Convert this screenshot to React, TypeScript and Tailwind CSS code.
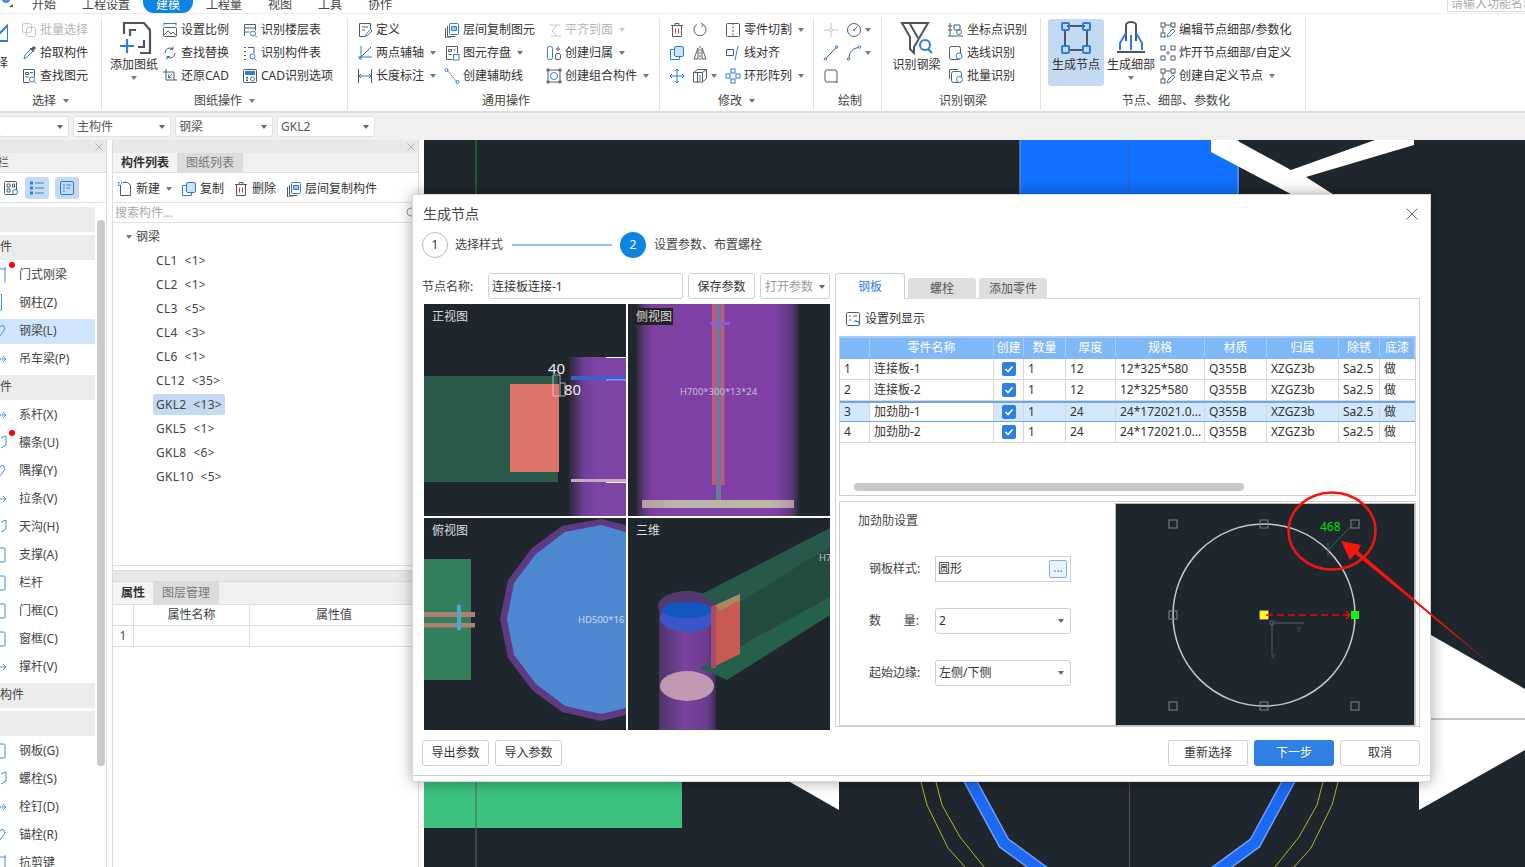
import React from "react";

const D = "#555b63";
const B = "#2a7de1";

const paths: Record<string, React.ReactNode> = {
  multi: (<g stroke="#c4c4c4" fill="none"><rect x="1.5" y="1.5" width="9" height="9" rx="2" /><rect x="5.5" y="5.5" width="9" height="9" rx="2" /></g>),
  pick: (<g fill="none"><path d="M3 14l1-4 6-6 2 2-6 6z" stroke={B} /><path d="M9 3l4 4M10 4l3-2.5 1.500 1.500L11.500 6z" stroke={D} fill={D} /></g>),
  find: (<g fill="none"><path d="M2.500 1.500h11v8M2.500 1.500v13h6" stroke={D} /><path d="M4.500 4.500h3v2h-3zM9 4.500h3M4.500 9h3" stroke={D} /><circle cx="11" cy="11.500" r="2.500" stroke={B} /><path d="M13 13.500l2 2" stroke={B} /></g>),
  scale: (<g fill="none"><path d="M2 1.500h12M2 .5v3M14 .5v3" stroke={B} /><rect x="1.500" y="5.500" width="13" height="9" rx="1" stroke={D} /><path d="M2 13l4-4 3 3 2-2 3 3" stroke={D} /></g>),
  swap: (<g fill="none"><path d="M3 8a5 5 0 0 1 8-4M13 8a5 5 0 0 1-8 4" stroke={D} /><path d="M11 1.500V4.500H8" stroke={B} /><path d="M5 14.500V11.500h3" stroke={B} /></g>),
  restore: (<g fill="none"><path d="M4 1v11h11M1 4h11v8" stroke={D} /><path d="M10 6L6.500 9.500M6.500 6.500v3h3" stroke={B} /></g>),
  tableQ: (<g fill="none"><path d="M2.500 14V2.500h11v6M2.500 6h11M2.500 10h5" stroke={D} /><circle cx="11" cy="11.500" r="2.500" stroke={B} /><path d="M13 13.500l2 2" stroke={B} /></g>),
  listQ: (<g fill="none"><path d="M2 2.500h2M2 6.500h2M2 10.500h2M2 14.500h2M6 2.500h6v6" stroke={D} /><circle cx="10.500" cy="11.500" r="2.500" stroke={B} /><path d="M12.500 13.500l2 2" stroke={B} /></g>),
  cad: (<g fill="none"><rect x="1.500" y="1.500" width="13" height="13" rx="1" stroke={D} /><rect x="3" y="3" width="10" height="4" fill={B} stroke="none" /><path d="M4 9.500h2M5 9.500v3M4 12.500h2" stroke={D} /><circle cx="10.500" cy="11" r="2" stroke={B} /></g>),
  def: (<g fill="none"><path d="M13.500 7V1.500h-11v13h6" stroke={D} /><path d="M5 5h6M5 8h3" stroke={D} /><path d="M8.500 14l1-2.500 4-4 1.500 1.500-4 4z" stroke={B} /></g>),
  axis: (<g fill="none"><path d="M2 14L14 2" stroke={D} /><path d="M4 1v14M1 12h14" stroke={B} /></g>),
  dim: (<g fill="none"><path d="M1.500 1v14M14.500 1v14" stroke={D} /><path d="M2 8h12M4 6L2 8l2 2M12 6l2 2-2 2" stroke={B} /></g>),
  copyLayer: (<g fill="none"><rect x="5.500" y="1.500" width="9" height="11" rx="1" stroke={B} /><path d="M3.500 4v10.500h8M1.500 6v10h6" stroke={D} /><path d="M7.500 4.500h5v4h-5z" fill="#9cc3f2" stroke={B} /></g>),
  save: (<g fill="none"><path d="M13.500 8V1.500h-11v13h6" stroke={D} /><path d="M4.500 4.500h3v2h-3zM9.500 5h2M4.500 9.500h3" stroke={D} /><rect x="9.500" y="9.500" width="5.500" height="5.500" stroke={B} /></g>),
  line: (<g fill="none"><path d="M3 2l10 12" stroke={D} strokeDasharray="2 1" /><circle cx="2.500" cy="2" r="1.500" stroke={B} /><circle cx="13.500" cy="14" r="1.500" stroke={B} /></g>),
  align: (<g fill="none" stroke="#c4c4c4"><path d="M3 3h11M5 14h10M11 3L6 9l5 5" /></g>),
  attr: (<g fill="none"><rect x="1.500" y="1.500" width="5" height="13" rx="2" stroke={B} /><rect x="9.500" y="8.500" width="5" height="6" rx="1.500" stroke={D} /><path d="M10 4h4M12 1.500V6" stroke={D} /></g>),
  group: (<g fill="none"><rect x="2" y="2" width="12" height="12" stroke={D} /><circle cx="8" cy="8" r="3.500" stroke={B} /><path d="M1 1h2v2H1zM13 1h2v2h-2zM1 13h2v2H1zM13 13h2v2h-2z" stroke={D} /></g>),
  trash: (<g fill="none"><path d="M2 3.500h12M6 3.500V1.500h4v2M3.500 3.500v11h9v-11" stroke={D} /><path d="M6.500 6.500v5M9.500 6.500v5" stroke="#d33" /></g>),
  rotate: (<g fill="none"><path d="M11 2.500a6 6 0 1 1-6 0" stroke={D} /><path d="M9 1l2 1.500L9.500 5" stroke={B} /></g>),
  cut: (<g fill="none"><rect x="1.500" y="1.500" width="13" height="13" rx="1" stroke={D} /><path d="M8 1v14" stroke={D} strokeDasharray="2 1.500" /></g>),
  copy: (<g fill="none"><rect x="5.500" y="1.500" width="9" height="10" rx="1.500" fill="#cfe2f9" stroke={B} /><path d="M5 4.500H1.500v10h9V12" stroke={B} /></g>),
  mirror: (<g fill="none"><path d="M8 1v14" stroke={D} strokeDasharray="2 1" /><path d="M6 3L2 14h4zM10 3l4 11h-4z" stroke={D} /></g>),
  lineAlign: (<g fill="none"><path d="M1.500 4.500h7v6h-7z" stroke={D} /><path d="M13 1l-3 14" stroke={B} /></g>),
  move: (<g fill="none" stroke={B}><path d="M8 1v14M1 8h14M6 3l2-2 2 2M6 13l2 2 2-2M3 6L1 8l2 2M13 6l2 2-2 2" /></g>),
  stretch: (<g fill="none"><path d="M1.500 4.500l4-3h9v9l-4 3.500h-9z" stroke={D} /><path d="M5.500 4.500v10M1.500 4.500h9v9M10.500 4.500l4-3" stroke={D} /><path d="M8 7v6" stroke={B} /></g>),
  ring: (<g fill="none" stroke={B}><rect x="6" y="1" width="4" height="4" /><rect x="1" y="6" width="4" height="4" /><rect x="11" y="6" width="4" height="4" /><rect x="6" y="11" width="4" height="4" /></g>),
  cross: (<g fill="none" stroke="#c4c4c4"><path d="M8 1v5M8 10v5M1 8h5M10 8h5" /><circle cx="8" cy="8" r="1.500" /></g>),
  dial: (<g fill="none"><circle cx="8" cy="8" r="6.500" stroke={D} /><path d="M8 8l3.500-3.500" stroke={D} /><circle cx="8" cy="8" r="1" fill={B} stroke="none" /></g>),
  seg: (<g fill="none"><path d="M3 13.500L13 2.500" stroke={D} /><circle cx="2.500" cy="14" r="1.300" stroke={B} /><circle cx="13.500" cy="2" r="1.300" stroke={B} /></g>),
  arc: (<g fill="none"><path d="M3 13.500C3 7 7 3 13 2.500" stroke={D} /><circle cx="2.500" cy="14" r="1.300" stroke={B} /><circle cx="13.500" cy="2" r="1.300" stroke={B} /></g>),
  rectD: (<g fill="none"><rect x="2" y="2" width="12" height="12" rx="2" stroke={D} /><circle cx="14" cy="14" r="1" fill={B} stroke="none" /></g>),
  coord: (<g fill="none"><path d="M2 1v13M0 14h15M0 4h4M0 8h4" stroke={D} /><path d="M6 3h6v5H6z" stroke={D} /><circle cx="11" cy="10" r="2.500" stroke={B} /></g>),
  selLine: (<g fill="none"><rect x="1.500" y="1.500" width="11" height="13" rx="2" stroke={D} /><circle cx="11" cy="11" r="3" fill="#fff" stroke={B} /></g>),
  batch: (<g fill="none"><path d="M1.500 11V1.500H10" stroke={D} /><rect x="3.500" y="3.500" width="10" height="11" rx="2" stroke={D} /><circle cx="11.500" cy="11.500" r="3" fill="#fff" stroke={B} /></g>),
  editNode: (<g fill="none"><path d="M3 3h10M3 3v10M13 3v3" stroke={D} /><rect x="1" y="1" width="4" height="4" fill="#fff" stroke={D} /><rect x="11" y="1" width="4" height="4" fill="#fff" stroke={D} /><rect x="1" y="11" width="4" height="4" fill="#fff" stroke={D} /><path d="M7 15l1-3 5-5 2 2-5 5z" stroke={B} /></g>),
  explode: (<g fill="none" stroke={D}><rect x="1" y="1" width="4" height="4" /><rect x="11" y="1" width="4" height="4" /><rect x="1" y="11" width="4" height="4" /><rect x="11" y="11" width="4" height="4" /><path d="M6 8h4M8 6v4" stroke={B} /></g>),
  newDoc: (<g fill="none"><path d="M3.500 4v10.500h10V4l-3-2.500H6" stroke={D} /><path d="M1 1h1.500v1.500H1zM4 1h1v1.500H4zM1 3.500h1.500V5H1z" fill={B} stroke="none" /></g>),
  gridIc: (<g fill="none"><rect x="1.500" y="1.500" width="12" height="13" rx="1" stroke={D} /><path d="M4 4h3v3H4zM9.500 4h2v3h-2zM4 9h3v3H4z" stroke={D} /><circle cx="12" cy="12" r="2.500" fill="#fff" stroke={B} /></g>),
  listIc: (<g fill="none" stroke={B}><path d="M6 3h9M6 8h9M6 13h9" /><rect x="1.500" y="2" width="2" height="2" /><rect x="1.500" y="7" width="2" height="2" /><rect x="1.500" y="12" width="2" height="2" /></g>),
  cardIc: (<g fill="none" stroke={B}><rect x="1.500" y="1.500" width="13" height="13" rx="1.500" /><path d="M4 5h2M7.500 5H12M4 8h2M7.500 8H11M4 11h2" /></g>),
  setCol: (<g fill="none"><rect x="1.500" y="1.500" width="13" height="13" rx="1" stroke={D} /><path d="M4 5h2M8 5h4M4 9h2" stroke={D} /><path d="M9 11l2-2v1.500h3v3" stroke={B} /></g>),
};

const Ic = ({ n, s = 16 }: { n: string; s?: number }) => (
  <svg width={s} height={s} viewBox="0 0 16 16" className="shrink-0" strokeWidth={1}>
    {paths[n]}
  </svg>
);

const Caret = ({ c = "border-t-[#777]" }: { c?: string }) => (
  <span className={`inline-block w-0 h-0 border-x-[3px] border-t-[4px] border-x-transparent ${c}`} />
);

const Tool = ({ i, t, caret, off, w }: { i: string; t: string; caret?: boolean; off?: boolean; w?: string }) => (
  <div className={`flex items-center h-[23px] gap-[3px] whitespace-nowrap ${off ? "text-[#b5b5b5]" : ""} ${w ?? ""}`}>
    <Ic n={i} />
    <span>{t}</span>
    {caret && <span className="ml-[3px] flex items-center"><Caret c={off ? "border-t-[#ccc]" : "border-t-[#777]"} /></span>}
  </div>
);

const IconPair = ({ a, b, caret }: { a: string; b?: string; caret?: boolean }) => (
  <div className="flex items-center h-[23px] gap-[7px]">
    <Ic n={a} />
    {b && <Ic n={b} />}
    {caret && <span className="-ml-[4px] flex items-center"><Caret /></span>}
  </div>
);

const Col = ({ children, w }: { children: React.ReactNode; w: string }) => (
  <div className={`flex flex-col ${w}`}>{children}</div>
);

const Group = ({ w, label, caret, shift, children }: { w: string; label: string; caret?: boolean; shift?: string; children: React.ReactNode }) => (
  <div className={`flex flex-col h-[92px] border-r border-[#e2e2e2] shrink-0 ${w}`}>
    <div className="flex h-[69px] pt-px">{children}</div>
    <div className={`flex items-center justify-center gap-[7px] h-[23px] pt-[5px] text-[#444] ${shift ?? ""}`}>
      <span>{label}</span>
      {caret && <Caret />}
    </div>
  </div>
);

const Big = ({ children, t, caret, cls }: { children: React.ReactNode; t: string; caret?: boolean; cls?: string }) => (
  <div className={`flex flex-col items-center shrink-0 rounded-[3px] ${cls ?? ""}`}>
    <div className="h-[34px] flex items-center justify-center mt-[2px]">{children}</div>
    <span className="whitespace-nowrap leading-[18px] mt-[1px]">{t}</span>
    {caret && <span className="flex mt-[2px]"><Caret /></span>}
  </div>
);

const Drop = ({ t, w }: { t: string; w: string }) => (
  <div className={`h-[21px] bg-white border border-[#e1e1e1] rounded-[3px] flex items-center justify-between pl-[3px] pr-[5px] text-[#555] ${w}`}>
    <span>{t}</span>
    <Caret c="border-t-[#666]" />
  </div>
);

const Close = () => (
  <svg width="8" height="8" viewBox="0 0 8 8" stroke="#aaa" fill="none"><path d="M.5.500l7 7M7.500.500l-7 7" /></svg>
);

const Side = ({ t, dot, sel, ic }: { t: string; dot?: boolean; sel?: boolean; ic: React.ReactNode }) => (
  <div className="relative h-[28px] flex items-center w-[95px]">
    {sel && <div className="absolute left-0 right-0 top-[2px] h-[25px] bg-[#cfe5fd]" />}
    <svg width="8" height="18" viewBox="0 0 8 18" fill="none" stroke="#3d8fe8" className="relative shrink-0">{ic}</svg>
    <span className="relative ml-[11px] text-[#444]">{t}</span>
    {dot && <span className="absolute left-[9px] top-[1px] w-[6px] h-[6px] rounded-full bg-[#f00]" />}
  </div>
);

const Section = ({ t }: { t?: string }) => (
  <div className="h-[25px] w-[95px] bg-[#ececec] my-[1.500px] flex items-center overflow-hidden text-[#444]">{t && <span className="whitespace-nowrap">{t}</span>}</div>
);

const sideIcon = {
  a: <path d="M-2 3h8M5 1v16" />,
  b: <path d="M0 0h1.500v16H0" />,
  c: <path d="M-2 6l5-3 2 4-5 7" />,
  d: <path d="M0 9h6M3 6l3 3-3 3" />,
  e: <path d="M1 4l5-2v9l-5 3" />,
  f: <rect x="-8" y="2" width="13" height="14" rx="1" />,
};

const Dtn = ({ t, w, off, cls }: { t: string; w: string; off?: boolean; cls?: string }) => (
  <div className={`h-[26px] rounded-[3px] border border-[#cfcfcf] bg-white flex items-center justify-center ${off ? "text-[#999]" : ""} ${w} ${cls ?? ""}`}>{t}</div>
);

const tree = ["CL1 <1>", "CL2 <1>", "CL3 <5>", "CL4 <3>", "CL6 <1>", "CL12 <35>", "GKL2 <13>", "GKL5 <1>", "GKL8 <6>", "GKL10 <5>"];

const rows = [
  ["1", "连接板-1", "1", "12", "12*325*580"],
  ["2", "连接板-2", "1", "12", "12*325*580"],
  ["3", "加劲肋-1", "1", "24", "24*172021.0..."],
  ["4", "加劲肋-2", "1", "24", "24*172021.0..."],
];

const heads = ["", "零件名称", "创建", "数量", "厚度", "规格", "材质", "归属", "除锈", "底漆"];

const Cell = ({ c, cls }: { c: React.ReactNode; cls?: string }) => (
  <div className={`flex items-center pl-[4px] border-r border-[#d8d8d8] whitespace-nowrap overflow-hidden ${cls ?? ""}`}>{c}</div>
);

const Check = () => (
  <span className="w-[14px] h-[14px] rounded-[2px] bg-[#2e80e3] flex items-center justify-center">
    <svg width="10" height="10" viewBox="0 0 10 10" fill="none" stroke="#fff" strokeWidth="1.600"><path d="M1.500 5l2.500 2.500 4.500-5" /></svg>
  </span>
);

const Field = ({ label, children }: { label: React.ReactNode; children: React.ReactNode }) => (
  <div className="flex items-center h-[26px]">
    <div className="w-[66px] text-[#444] whitespace-nowrap">{label}</div>
    {children}
  </div>
);

const Select = ({ t }: { t: string }) => (
  <div className="w-[136px] h-[26px] border border-[#cfcfcf] rounded-[3px] flex items-center justify-between pl-[3px] pr-[6px]">
    <span>{t}</span>
    <Caret c="border-t-[#666]" />
  </div>
);

const View = ({ label, labelCls, children }: { label: string; labelCls?: string; children: React.ReactNode }) => (
  <div className="relative bg-[#20262e] h-[212px] w-[202px] overflow-hidden">
    {children}
    <span className={`absolute left-[7px] top-[4px] px-px leading-[17px] text-[#dcdcdc] ${labelCls ?? ""}`}>{label}</span>
  </div>
);

const FrontView = () => (
  <svg width="202" height="212" viewBox="0 0 202 212">
    <defs>
      <linearGradient id="col1" x1="0" x2="1" y1="0" y2="0">
        <stop offset="0" stopColor="#2c2838" />
        <stop offset=".25" stopColor="#6e3f96" />
        <stop offset=".5" stopColor="#7c46a6" />
        <stop offset="1" stopColor="#7f43a6" />
      </linearGradient>
    </defs>
    <rect x="145" y="53" width="57" height="159" fill="url(#col1)" />
    <rect x="0" y="72" width="134" height="106" fill="#2a5b4a" />
    <rect x="86" y="80" width="49" height="88" fill="#dc7268" />
    <rect x="147" y="72" width="55" height="4" fill="#3a5fcf" />
    <rect x="182" y="75" width="20" height="1.500" fill="#8f8fee" />
    <rect x="147" y="175" width="55" height="3" fill="#c6a9c2" />
    <rect x="182" y="53" width="20" height="1" fill="#fff" />
    <rect x="182" y="178" width="20" height="1" fill="#fff" />
    <path d="M129 92V71h7v21zM136 79h5v13h-5" fill="none" stroke="#e8e8e8" strokeWidth=".700" />
    <text x="124" y="70" fill="#eee" fontSize="15">40</text>
    <text x="140" y="91" fill="#eee" fontSize="15">80</text>
  </svg>
);

const SideView = () => (
  <svg width="202" height="212" viewBox="0 0 202 212">
    <defs>
      <linearGradient id="col2" x1="0" x2="1" y1="0" y2="0">
        <stop offset="0" stopColor="#2c2838" />
        <stop offset=".05" stopColor="#5e3a80" />
        <stop offset=".1" stopColor="#7f40a4" />
        <stop offset=".85" stopColor="#8040a6" />
        <stop offset=".95" stopColor="#5e3a80" />
        <stop offset="1" stopColor="#2c2838" />
      </linearGradient>
      <linearGradient id="plate" x1="0" x2="1" y1="0" y2="0">
        <stop offset="0" stopColor="#b69aa8" />
        <stop offset=".18" stopColor="#bbb2a8" />
        <stop offset=".82" stopColor="#bbbba8" />
        <stop offset="1" stopColor="#b698a8" />
      </linearGradient>
    </defs>
    <rect x="8" y="0" width="163" height="212" fill="url(#col2)" />
    <rect x="84" y="0" width="4" height="181" fill="#c4587a" />
    <rect x="93" y="0" width="3.500" height="181" fill="#c4587a" />
    <rect x="88" y="0" width="5" height="196" fill="#6a7a9a" />
    <rect x="82" y="18" width="20" height="3" fill="#7f62dc" />
    <rect x="14" y="196" width="152" height="8" fill="url(#plate)" />
    <text x="52" y="91" fill="#cdbcdc" fontSize="9.500">H700*300*13*24</text>
  </svg>
);

const TopView = () => (
  <svg width="202" height="212" viewBox="0 0 202 212">
    <rect x="0" y="41" width="47" height="121" fill="#33805e" />
    <rect x="0" y="94" width="51" height="5" fill="#b08070" />
    <rect x="0" y="105" width="51" height="4.500" fill="#b08070" />
    <rect x="33" y="87" width="4" height="25" fill="#4aa8c8" />
    <polygon points="177,1 138,8 108,30 84,62 76,101 84,140 108,172 138,194 177,203 202,197 202,7" fill="#5e3a80" />
    <polygon points="177,7 141,14 112,36 90,65 83,101 90,137 112,166 141,188 177,196 202,190 202,14" fill="#4d88d0" />
    <text x="154" y="105" fill="#c9d8ee" fontSize="9.500">HD500*16</text>
  </svg>
);

const ThreeD = () => (
  <svg width="202" height="212" viewBox="0 0 202 212">
    <defs>
      <linearGradient id="col3" x1="0" x2="1" y1="0" y2="0">
        <stop offset="0" stopColor="#4d3568" />
        <stop offset=".45" stopColor="#7a42a0" />
        <stop offset=".85" stopColor="#6b3c8e" />
        <stop offset="1" stopColor="#3c2d56" />
      </linearGradient>
    </defs>
    <rect x="31" y="88" width="57" height="124" fill="url(#col3)" />
    <ellipse cx="59" cy="88" rx="29" ry="15" fill="#543870" />
    <polygon points="100,90 202,29 202,82 100,148" fill="#234a3e" />
    <polygon points="72,77 202,10 202,29 99,92" fill="#27594a" />
    <polygon points="72,150 202,79 202,97 99,162" fill="#25604a" />
    <ellipse cx="59" cy="100" rx="27" ry="14" fill="#3c55c8" />
    <ellipse cx="59" cy="92" rx="25" ry="8" fill="#1058c0" />
    <polygon points="83,89 112,76 112,136 83,150" fill="#c85a52" />
    <polygon points="83,89 88,87 88,150 83,150" fill="#a84a6a" />
    <polygon points="88,87 112,76 112,82 92,93" fill="#a88a60" />
    <ellipse cx="59" cy="168" rx="27" ry="15" fill="#c09ab0" />
    <text x="191" y="43" fill="#b9c8c2" fontSize="9.500">H7</text>
  </svg>
);

const MiniCad = () => {
  const xs = [57, 148, 239];
  const ys = [20, 111, 202];
  return (
    <svg width="298" height="221" viewBox="0 0 298 221" className="block">
      <circle cx="148" cy="111" r="91" fill="none" stroke="#c8c8c8" strokeWidth="1.500" />
      {xs.map((x) =>
        ys.map((y) =>
          x === 239 && y === 111 ? null : (
            <rect key={`${x}-${y}`} x={x - 4} y={y - 4} width="8" height="8" fill="none" stroke="#80858b" strokeWidth="1" />
          )
        )
      )}
      <path d="M212 46L239 18M212 39v14" stroke="#2f6f3e" fill="none" />
      <text x="204" y="27" fill="#00e000" fontSize="12">468</text>
      <path d="M156 119h32M156 119v31" stroke="#585c62" fill="none" />
      <rect x="154" y="117" width="4" height="4" fill="none" stroke="#585c62" />
      <text x="181" y="128" fill="#585c62" fontSize="7">Y</text>
      <text x="155" y="155" fill="#585c62" fontSize="7">X</text>
      <rect x="144" y="107" width="8" height="8" fill="#ff0" stroke="#ddd" strokeWidth=".500" />
      <rect x="235" y="107" width="8" height="8" fill="#0f0" />
      <path d="M150 111h85" stroke="#f00" strokeWidth="1.500" strokeDasharray="7 4" />
      <path d="M230 107l4 4-4 4" stroke="#f00" strokeWidth="1.500" fill="none" />
    </svg>
  );
};

const Canvas = () => (
  <svg width="1101" height="727" viewBox="424 140 1101 727" className="absolute left-0 top-0">
    <path d="M476 140v60" stroke="#0e8a14" strokeWidth="1.200" />
    <rect x="1020" y="140" width="219" height="60" fill="#1271ff" />
    <path d="M1020 140v60M1238 140v60" stroke="#6ea6f0" />
    <path d="M1129 140v60" stroke="#44609a" />
    <polygon points="1211,140 1236,140 1291,170 1375,140 1414,140 1414,145 1306,177 1342,200 1302,200 1211,152" fill="#fff" />
    <rect x="424" y="782" width="258" height="46" fill="#3cc17f" />
    <path d="M476 782v85" stroke="#5c6066" />
    <path d="M1129.500 782v85" stroke="#5a4c4c" />
    <polygon points="790,782 839,810 839,782" fill="#fff" />
    <polygon points="1431,635 1525,689 1525,750 1419,810 1419,630" fill="#fff" />
    <path d="M1431 719h94" stroke="#8a8a8a" />
    <path d="M967 775L1004 843L1045 873M1292 775L1255 843L1214 873" fill="none" stroke="#6f9ff0" strokeWidth="13" />
    <path d="M967 775L1004 843L1045 873M1292 775L1255 843L1214 873" fill="none" stroke="#1c69f5" strokeWidth="10" />
    <path d="M921 782l6 23 21 43 17 19M936 782l6 23 18 32 24 30M1338 782l-6 23-21 43-17 19M1323 782l-6 23-18 32-24 30" fill="none" stroke="#d8d83a" strokeWidth=".800" />
  </svg>
);

export default function App() {
  return (
    <div className="relative w-[1525px] h-[867px] overflow-hidden bg-white text-xs text-[#333] font-['Noto_Sans','Noto_Sans_CJK_SC',sans-serif]">
      {/* menu */}
      <div className="h-[14px] overflow-hidden border-b border-[#eee] flex items-end relative">
        <div className="flex items-center h-[14px] w-full text-[#444]">
          <svg width="12" height="14" viewBox="0 0 12 14" className="ml-[2px] mr-[18px]"><circle cx="4" cy="0" r="4" fill="#3d8fe8" /><path d="M7 8l4-3v3z" fill="#555" /></svg>
          <span className="mb-[2px] w-[50px]">开始</span>
          <span className="mb-[2px] w-[61px]">工程设置</span>
          <span className="w-[50px] h-[14px] rounded-b-[11px] bg-[#0b84e3] text-white flex items-center justify-center"><span className="mb-[2px]">建模</span></span>
          <span className="mb-[2px] ml-[13px] w-[62px]">工程量</span>
          <span className="mb-[2px] w-[50px]">视图</span>
          <span className="mb-[2px] w-[50px]">工具</span>
          <span className="mb-[2px]">协作</span>
          <div className="ml-auto w-[78px] h-[12px] border-x border-b border-[#ddd] rounded-b-[2px] text-[#aaa] pl-[3px] flex items-center overflow-hidden whitespace-nowrap"><span className="mb-[4px]">请输入功能名称</span></div>
        </div>
      </div>

      {/* ribbon */}
      <div className="h-[99px] pt-[4px] flex border-b-2 border-[#dedede] overflow-hidden">
        <Group w="w-[102px]" label="选择" caret>
          <div className="w-[21px] shrink-0 -ml-[13px] mr-[13px] flex flex-col items-end overflow-visible">
            <svg width="24" height="28" viewBox="0 0 24 28" className="shrink-0"><path d="M24 10L8 26h16z" fill="none" stroke="#2a7de1" strokeWidth="2" transform="translate(0,-4)" /></svg>
            <span className="mt-[8px] whitespace-nowrap">选择</span>
          </div>
          <Col w="w-[80px]">
            <Tool i="multi" t="批量选择" off />
            <Tool i="pick" t="拾取构件" />
            <Tool i="find" t="查找图元" />
          </Col>
        </Group>
        <Group w="w-[246px]" label="图纸操作" caret>
          <div className="w-[60px] shrink-0 flex justify-center pl-[4px]">
            <Big t="添加图纸" caret>
              <svg width="36" height="36" viewBox="0 0 36 36" fill="none" strokeWidth="2.200">
                <path d="M8 14V3h20l6 7v23H24" stroke="#4e5560" />
                <path d="M14 16v-6h6M28 20v7h-6" stroke="#4e5560" />
                <path d="M4 26h14M11 19v14" stroke="#2a7de1" />
              </svg>
            </Big>
          </div>
          <Col w="w-[80px]">
            <Tool i="scale" t="设置比例" />
            <Tool i="swap" t="查找替换" />
            <Tool i="restore" t="还原CAD" />
          </Col>
          <Col w="w-[100px]">
            <Tool i="tableQ" t="识别楼层表" />
            <Tool i="listQ" t="识别构件表" />
            <Tool i="cad" t="CAD识别选项" />
          </Col>
        </Group>
        <Group w="w-[312px]" label="通用操作" shift="pl-[5px]">
          <div className="w-[9px] shrink-0" />
          <Col w="w-[87px]">
            <Tool i="def" t="定义" />
            <Tool i="axis" t="两点辅轴" caret />
            <Tool i="dim" t="长度标注" caret />
          </Col>
          <Col w="w-[102px]">
            <Tool i="copyLayer" t="层间复制图元" />
            <Tool i="save" t="图元存盘" caret />
            <Tool i="line" t="创建辅助线" />
          </Col>
          <Col w="w-[110px]">
            <Tool i="align" t="平齐到面" caret off />
            <Tool i="attr" t="创建归属" caret />
            <Tool i="group" t="创建组合构件" caret />
          </Col>
        </Group>
        <Group w="w-[154px]" label="修改" caret>
          <div className="w-[9px] shrink-0" />
          <Col w="w-[56px]">
            <IconPair a="trash" b="rotate" />
            <IconPair a="copy" b="mirror" />
            <IconPair a="move" b="stretch" caret />
          </Col>
          <Col w="w-[88px]">
            <Tool i="cut" t="零件切割" caret />
            <Tool i="lineAlign" t="线对齐" />
            <Tool i="ring" t="环形阵列" caret />
          </Col>
        </Group>
        <Group w="w-[68px]" label="绘制" shift="pl-[5px]">
          <div className="w-[9px] shrink-0" />
          <Col w="w-[50px]">
            <IconPair a="cross" b="dial" caret />
            <IconPair a="seg" b="arc" caret />
            <IconPair a="rectD" />
          </Col>
        </Group>
        <Group w="w-[159px]" label="识别钢梁" shift="pl-[4px]">
          <div className="w-[10px] shrink-0" />
          <Big t="识别钢梁" cls="w-[49px] mr-[7px]">
            <svg width="34" height="34" viewBox="0 0 34 34" fill="none" strokeWidth="2">
              <path d="M2 2h26L14 26v6L10 28V16z" stroke="#4e5560" />
              <path d="M10 3l8 14" stroke="#4e5560" />
              <circle cx="25" cy="24" r="5" stroke="#2a7de1" />
              <path d="M28 28l4 4" stroke="#2a7de1" />
            </svg>
          </Big>
          <Col w="w-[90px]">
            <Tool i="coord" t="坐标点识别" />
            <Tool i="selLine" t="选线识别" />
            <Tool i="batch" t="批量识别" />
          </Col>
        </Group>
        <Group w="w-[265px]" label="节点、细部、参数化" shift="pl-[6px]">
          <div className="w-[7px] shrink-0" />
          <Big t="生成节点" cls="w-[56px] h-[67px] bg-[#c4daf2]">
            <svg width="32" height="34" viewBox="0 0 32 34" fill="none">
              <path d="M7 5h18M5 9v16M27 9v16M9 29h14" stroke="#4e5560" strokeWidth="2" />
              <rect x="2" y="2" width="7" height="7" rx="1" stroke="#2a7de1" strokeWidth="2" />
              <rect x="23" y="2" width="7" height="7" rx="1" stroke="#2a7de1" strokeWidth="2" />
              <rect x="2" y="25" width="7" height="7" rx="1" stroke="#2a7de1" strokeWidth="2" />
              <rect x="23" y="25" width="7" height="7" rx="1" stroke="#2a7de1" strokeWidth="2" />
            </svg>
          </Big>
          <div className="w-[3px] shrink-0" />
          <Big t="生成细部" caret cls="w-[48px] mr-[5px]">
            <svg width="30" height="34" viewBox="0 0 30 34" fill="none" strokeWidth="2">
              <path d="M10 4a5 3 0 0 1 10 0v16M10 4v16" stroke="#4e5560" />
              <path d="M10 12l-6 10v7M20 12l6 10v7M15 14v15" stroke="#2a7de1" />
              <path d="M1 31h28" stroke="#4e5560" />
            </svg>
          </Big>
          <Col w="w-[140px]">
            <Tool i="editNode" t="编辑节点细部/参数化" />
            <Tool i="explode" t="炸开节点细部/自定义" />
            <Tool i="editNode" t="创建自定义节点" caret />
          </Col>
        </Group>
      </div>

      {/* combo bar */}
      <div className="h-[27px] bg-[#f0f0f0] flex items-center gap-[4px]">
        <Drop t="" w="w-[70px] -ml-px" />
        <Drop t="主构件" w="w-[98px]" />
        <Drop t="钢梁" w="w-[98px]" />
        <Drop t="GKL2" w="w-[98px]" />
      </div>

      {/* main */}
      <div className="flex h-[727px]">
        {/* nav panel */}
        <div className="w-[107px] shrink-0 border-r border-[#dcdcdc] flex flex-col overflow-hidden">
          <div className="h-[13px] bg-[#e8e8e8] flex items-center justify-end pr-[3px] shrink-0"><Close /></div>
          <div className="h-[20px] bg-[#f0f0f0] border-b border-[#dcdcdc] flex items-center text-[#555] shrink-0 overflow-hidden"><span className="-ml-[3px]">栏</span></div>
          <div className="h-[30px] border-b border-[#e0e0e0] flex items-center pl-[3px] gap-[6px] shrink-0">
            <Ic n="gridIc" />
            <span className="w-[24px] h-[22px] rounded-[3px] bg-[#c4daf2] flex items-center justify-center"><Ic n="listIc" /></span>
            <span className="w-[24px] h-[22px] rounded-[3px] bg-[#c4daf2] flex items-center justify-center"><Ic n="cardIc" /></span>
          </div>
          <div className="flex relative flex-1 pt-[2px]">
            <div className="flex flex-col w-[97px] shrink-0">
              <Section />
              <Section t="件" />
              <Side t="门式刚梁" dot ic={sideIcon.a} />
              <Side t="钢柱(Z)" ic={sideIcon.b} />
              <Side t="钢梁(L)" sel ic={sideIcon.c} />
              <Side t="吊车梁(P)" ic={sideIcon.d} />
              <Section t="件" />
              <Side t="系杆(X)" ic={sideIcon.d} />
              <Side t="檩条(U)" dot ic={sideIcon.e} />
              <Side t="隅撑(Y)" ic={sideIcon.c} />
              <Side t="拉条(V)" ic={sideIcon.d} />
              <Side t="天沟(H)" ic={sideIcon.e} />
              <Side t="支撑(A)" ic={sideIcon.f} />
              <Side t="栏杆" ic={sideIcon.f} />
              <Side t="门框(C)" ic={sideIcon.f} />
              <Side t="窗框(C)" ic={sideIcon.f} />
              <Side t="撑杆(V)" ic={sideIcon.d} />
              <Section t="构件" />
              <Section />
              <Side t="钢板(G)" ic={sideIcon.f} />
              <Side t="螺栓(S)" ic={sideIcon.e} />
              <Side t="栓钉(D)" ic={sideIcon.d} />
              <Side t="锚栓(R)" ic={sideIcon.c} />
              <Side t="抗剪键" ic={sideIcon.a} />
            </div>
            <div className="w-[8px] h-[546px] mt-[15px] rounded-[4px] bg-[#c9c9c9]" />
          </div>
        </div>

        <div className="w-[5px] shrink-0" />

        {/* list panel */}
        <div className="w-[307px] shrink-0 flex flex-col border-x border-[#dcdcdc]">
          <div className="h-[13px] bg-[#e8e8e8] flex items-center justify-end pr-[3px] shrink-0"><Close /></div>
          <div className="h-[20px] bg-[#f0f0f0] border-b border-[#dcdcdc] flex shrink-0">
            <span className="w-[64px] bg-[#f4f4f4] font-bold text-[#333] flex items-center justify-center">构件列表</span>
            <span className="w-[66px] bg-[#dcdcdc] text-[#777] flex items-center justify-center">图纸列表</span>
          </div>
          <div className="h-[30px] pt-[2px] border-b border-[#e0e0e0] flex items-center pl-[4px] shrink-0">
            <Tool i="newDoc" t="新建" caret />
            <span className="w-[9px]" />
            <Tool i="copy" t="复制" />
            <span className="w-[9px]" />
            <Tool i="trash" t="删除" />
            <span className="w-[10px]" />
            <Tool i="copyLayer" t="层间复制构件" />
          </div>
          <div className="h-[20px] border-b border-[#e0e0e0] flex items-center justify-between pl-[2px] pr-[1px] text-[#aaa] shrink-0">
            <span>搜索构件...</span>
            <svg width="11" height="11" viewBox="0 0 11 11" fill="none" stroke="#999"><circle cx="5" cy="5" r="4" /><path d="M8 8l2.500 2.500" /></svg>
          </div>
          <div className="h-[343px] flex flex-col pt-[2px] border-b border-[#dcdcdc] shrink-0">
            <div className="h-[23px] flex items-center pl-[13px] gap-[4px] text-[#444]"><Caret /><span>钢梁</span></div>
            {tree.map((t) => (
              <div key={t} className="h-[24px] flex items-center pl-[40px]">
                <span className={`px-[3px] h-[21px] leading-[21px] rounded-[2px] whitespace-pre text-[#444] tracking-[.3px] ${t.startsWith("GKL2") ? "bg-[#c4daf2]" : ""}`}>{t.replace(" ", "  ")}</span>
              </div>
            ))}
          </div>
          <div className="h-[4px] shrink-0" />
          <div className="h-[12px] bg-[#e8e8e8] border-y border-[#dcdcdc] shrink-0" />
          <div className="h-[23px] bg-[#f0f0f0] border-b border-[#dcdcdc] flex shrink-0">
            <span className="w-[40px] bg-[#f4f4f4] font-bold flex items-center justify-center">属性</span>
            <span className="w-[66px] bg-[#dcdcdc] text-[#777] flex items-center justify-center">图层管理</span>
          </div>
          <div className="grid grid-cols-[21px_116px_1fr] h-[21px] border-b border-[#dcdcdc] text-[#444] shrink-0">
            <span className="border-r border-[#dcdcdc]" />
            <span className="border-r border-[#dcdcdc] flex items-center justify-center">属性名称</span>
            <span className="flex items-center justify-center">属性值</span>
          </div>
          <div className="grid grid-cols-[21px_116px_1fr] h-[21px] border-b border-[#dcdcdc] text-[#444] shrink-0">
            <span className="border-r border-[#dcdcdc] flex items-center justify-center">1</span>
            <span className="border-r border-[#dcdcdc]" />
            <span />
          </div>
        </div>

        <div className="w-[5px] shrink-0" />

        {/* canvas */}
        <div className="relative flex-1 bg-[#20262e] overflow-hidden">
          <Canvas />
        </div>
      </div>

      {/* dialog */}
      <div className="absolute left-[412px] top-[194px] w-[1019px] h-[588px] bg-white border border-[#d8d8d8] shadow-[0_0_14px_rgba(0,0,0,0.35)] flex flex-col">
        <div className="h-[37px] flex items-center justify-between pl-[10px] pr-[12px] shrink-0">
          <span className="text-sm text-[#444]">生成节点</span>
          <svg width="12" height="12" viewBox="0 0 12 12" fill="none" stroke="#666"><path d="M.5.500l11 11M11.500.500l-11 11" /></svg>
        </div>
        <div className="h-[26px] flex items-center pl-[9px] shrink-0">
          <span className="w-[26px] h-[26px] rounded-full border border-[#bbb] flex items-center justify-center">1</span>
          <span className="ml-[7px] text-[#444]">选择样式</span>
          <span className="w-[100px] h-[2px] bg-[#90c4f0] ml-[9px]" />
          <span className="ml-[8px] w-[26px] h-[26px] rounded-full bg-[#0b84e3] text-white flex items-center justify-center">2</span>
          <span className="ml-[8px] text-[#444]">设置参数、布置螺栓</span>
        </div>
        <div className="flex flex-1 pt-[15px] pl-[9px]">
          {/* left */}
          <div className="w-[409px] shrink-0 flex flex-col">
            <div className="flex items-center h-[26px] shrink-0">
              <span className="w-[66px] text-[#444] pt-px">节点名称:</span>
              <div className="w-[195px] h-[26px] border border-[#cfcfcf] rounded-[3px] flex items-center pl-[3px] pt-px">连接板连接-1</div>
              <Dtn t="保存参数" w="w-[67px]" cls="ml-[5px] pt-px" />
              <div className="w-[70px] h-[26px] ml-[5px] border border-[#cfcfcf] rounded-[3px] flex items-center justify-between px-[4px] text-[#999] pt-px">
                <span>打开参数</span>
                <Caret c="border-t-[#666]" />
              </div>
            </div>
            <div className="grid grid-cols-[202px_202px] gap-[2px] mt-[5px] ml-[2px]">
              <View label="正视图"><FrontView /></View>
              <View label="侧视图" labelCls="bg-[#222]"><SideView /></View>
              <View label="俯视图"><TopView /></View>
              <View label="三维"><ThreeD /></View>
            </div>
            <div className="flex gap-[6px] mt-[10px]">
              <Dtn t="导出参数" w="w-[67px]" />
              <Dtn t="导入参数" w="w-[67px]" />
            </div>
          </div>

          {/* right */}
          <div className="w-[585px] ml-[4px] shrink-0 flex flex-col">
            <div className="h-[26px] flex items-end relative z-10 shrink-0">
              <span className="w-[70px] h-[26px] bg-white border border-b-0 border-[#cfcfcf] rounded-t-[3px] text-[#2e80e3] flex items-center justify-center">钢板</span>
              <span className="w-[68px] h-[21px] ml-[3px] bg-[#dedede] rounded-t-[3px] text-[#555] flex items-center justify-center">螺栓</span>
              <span className="w-[68px] h-[21px] ml-[3px] bg-[#dedede] rounded-t-[3px] text-[#555] flex items-center justify-center">添加零件</span>
            </div>
            <div className="h-[429px] -mt-px border border-[#cfcfcf] pl-[3px] pr-[4px] pt-[3px] flex flex-col shrink-0">
              <div className="h-[34px] flex items-center pl-[6px] gap-[4px] shrink-0">
                <Ic n="setCol" />
                <span>设置列显示</span>
              </div>
              <div className="h-[160px] border border-[#cfcfcf] border-t-0 relative shrink-0 -mr-[1px]">
                <div className="grid grid-cols-[30px_124px_30px_42px_50px_89px_62px_72px_41px_35px] h-[23px] pb-[2px] bg-[#7fb8f7] border-t-2 border-[#a5cdf8] text-white">
                  {heads.map((h, i) => (
                    <div key={i} className="flex items-center justify-center border-r border-[#a5cdf8] whitespace-nowrap">{h}</div>
                  ))}
                </div>
                {rows.map((r, i) => (
                  <div
                    key={r[0]}
                    className={`grid grid-cols-[30px_124px_30px_42px_50px_89px_62px_72px_41px_35px] h-[21px] border-b ${i === 2 ? "bg-[#d4e8fd] border-y-2 border-[#6ba8e8]" : "border-[#d8d8d8]"}`}
                  >
                    <Cell c={r[0]} />
                    <Cell c={r[1]} cls="bg-white" />
                    <Cell c={<Check />} cls="justify-center !pl-0" />
                    <Cell c={r[2]} />
                    <Cell c={r[3]} />
                    <Cell c={r[4]} />
                    <Cell c="Q355B" />
                    <Cell c="XZGZ3b" />
                    <Cell c="Sa2.5" />
                    <Cell c="做" cls="border-r-0" />
                  </div>
                ))}
                <div className="absolute left-[14px] bottom-[4px] w-[390px] h-[8px] rounded-[4px] bg-[#c9c9c9]" />
              </div>
              <div className="flex-1 mt-[5px] mb-[1px] border border-[#cfcfcf] flex -mr-[1px]">
                <div className="w-[276px] shrink-0 flex flex-col">
                  <div className="pl-[18px] pt-[11px] h-[54px] text-[#444]">加劲肋设置</div>
                  <div className="pl-[29px] flex flex-col gap-[26px]">
                    <Field label="钢板样式:">
                      <div className="w-[136px] h-[26px] border border-[#cfcfcf] flex items-center justify-between pl-[2px] pr-[3px]">
                        <span>圆形</span>
                        <span className="w-[18px] h-[18px] rounded-[2px] bg-[#eef3f9] border border-[#7fb0ea] text-[#2e80e3] flex items-center justify-center leading-none pb-[3px]">...</span>
                      </div>
                    </Field>
                    <Field label={<span className="flex w-[50px] justify-between"><span>数</span><span>量:</span></span>}>
                      <Select t="2" />
                    </Field>
                    <Field label="起始边缘:">
                      <Select t="左侧/下侧" />
                    </Field>
                  </div>
                </div>
                <div className="w-[298px] h-[221px] mt-[2px] bg-[#20262e] shrink-0 outline outline-1 outline-[#bbb]">
                  <MiniCad />
                </div>
              </div>
            </div>
            <div className="flex justify-end gap-[6px] mt-[13px]">
              <Dtn t="重新选择" w="w-[80px]" />
              <div className="w-[80px] h-[26px] rounded-[3px] bg-[#2e80e3] text-white flex items-center justify-center">下一步</div>
              <Dtn t="取消" w="w-[80px]" />
            </div>
          </div>
        </div>
        <div className="h-[6px] border-t border-[#cfcfcf] shrink-0" />
      </div>

      {/* annotation over everything */}
      <svg width="1525" height="867" className="absolute left-0 top-0 pointer-events-none">
        <ellipse cx="1332" cy="531" rx="43.500" ry="38.500" fill="none" stroke="#f5160e" strokeWidth="2.500" />
        <polygon points="1341,541 1361,545 1358,551 1488,662 1355,554 1350,560" fill="#f5160e" />
      </svg>
    </div>
  );
}
